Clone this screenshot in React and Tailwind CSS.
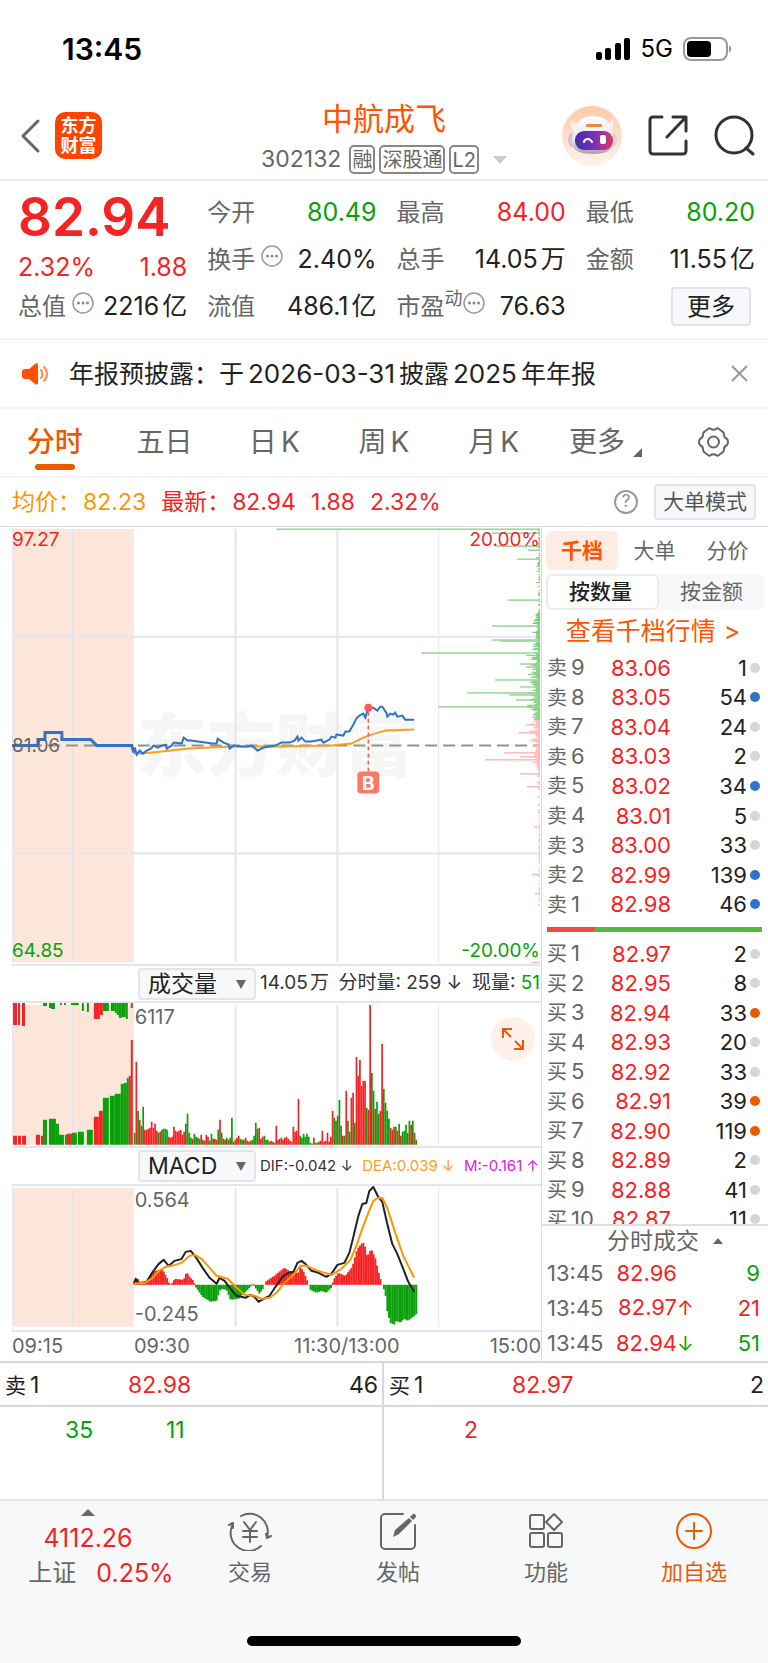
import React, { useState } from 'react';

const sellOrders = [
    { level: '9', price: '83.06', amount: 1, dot: 'gray' },
    { level: '8', price: '83.05', amount: 54, dot: 'blue' },
    { level: '7', price: '83.04', amount: 24, dot: 'gray' },
    { level: '6', price: '83.03', amount: 2, dot: 'gray' },
    { level: '5', price: '83.02', amount: 34, dot: 'blue' },
    { level: '4', price: '83.01', amount: 5, dot: 'gray' },
    { level: '3', price: '83.00', amount: 33, dot: 'gray' },
    { level: '2', price: '82.99', amount: 139, dot: 'blue' },
    { level: '1', price: '82.98', amount: 46, dot: 'blue' },
];

const buyOrders = [
    { level: '1', price: '82.97', amount: 2, dot: 'gray' },
    { level: '2', price: '82.95', amount: 8, dot: 'gray' },
    { level: '3', price: '82.94', amount: 33, dot: 'orange' },
    { level: '4', price: '82.93', amount: 20, dot: 'gray' },
    { level: '5', price: '82.92', amount: 33, dot: 'gray' },
    { level: '6', price: '82.91', amount: 39, dot: 'orange' },
    { level: '7', price: '82.90', amount: 119, dot: 'orange' },
    { level: '8', price: '82.89', amount: 2, dot: 'gray' },
    { level: '9', price: '82.88', amount: 41, dot: 'gray' },
    { level: '10', price: '82.87', amount: 11, dot: 'gray' },
];

const dotColors = {
    gray: 'bg-[#d3d6db]',
    blue: 'bg-[#2f74c8]',
    orange: 'bg-[#ec5a00]',
};

const RED = '#f52424';
const GREEN = '#0aa00a';
const GRID = '#e4e6ed';

// Price chart
const preOpenLine = '0,219 26,219 26,213 33,213 33,206 50,206 50,213 79,213 82,216 85,219 120,219 122,226';
const priceLine = '122,226 123,221 125,228 128,224 131,227 135,224 139,222 142,219 146,221 150,219 154,218 155,222 160,219 162,216 170,217 172,211 176,214 179,214 186,215 194,216 200,217 205,217 206,212 212,216 217,218 218,222 222,219 230,220 236,220 240,219 246,224 252,221 258,220 264,219 270,216 278,216 283,214 286,210 287,214 290,211 294,215 300,215 310,213 312,216 318,213 320,210 324,211 325,208 332,209 334,205 338,205 342,198 345,192 348,189 352,187 354,191 357,181 362,181 366,184 369,180 371,180 375,186 376,190 379,187 382,188 384,186 386,190 391,189 394,193 403,193';
const averageLine = '122,227 130,227 150,225 177,222 220,220 270,220 320,219 340,217 350,212 357,209 367,206 374,204 403,203';

// [y, length] of the resting orders at each price
const bigAsks = [[2, 264], [6, 48], [19, 44], [23, 12], [32, 23], [73, 32], [99, 48], [113, 48], [114, 40], [126, 119], [137, 20], [140, 14], [153, 45], [160, 20], [166, 73], [168, 31], [173, 24], [180, 102]];
const bigBids = [[198, 14], [206, 22], [226, 36], [230, 20], [233, 55], [247, 20], [260, 13], [300, 6], [348, 8], [367, 5], [436, 9]];

const noise = (n) => {
    const v = Math.sin(n * 12.9898) * 43758.5453;
    return v - Math.floor(v);
};

const smallOrders = [];
for (let y = 2; y < 380; y++) {
    let base = 1;
    let size = 4;
    if (y > 85 && y <= 125) { base = 2; size = 7; }
    if (y > 125 && y < 195) { base = 3; size = 12; }
    if (y >= 195 && y < 240) { base = 2; size = 10; }
    if (y >= 285) size = 1;
    if (y > 245 && noise(y + 7) < 0.6) continue;
    if (y < 85 && noise(y + 3) < 0.3) continue;
    smallOrders.push([y, base + noise(y) * noise(y + 50) * size]);
}

// Volume: plus is a rising minute, minus a falling one
const volumes = [-12, 83, -34, 25, 19, -38, 15, 15, 16, 17, 23, 17, 21, 14, -12, 13, -15, -16, -16, -15, 8, 7, 8, 18, 14, 13, 14, 15, 10, 13, -21, -31, -12, -7, 6, -11, -8, -7, 6, 10, -5, 4, 10, 8, -4, -11, -6, 6, 5, -15, 25, -12, -6, 5, -7, 5, -7, -27, 3, 5, 7, 9, -6, -5, 5, 7, -4, 3, 4, -5, -9, -22, -16, 17, 6, 8, -9, -5, -5, 3, 4, -3, 2, 19, 5, 6, -7, 5, 7, 8, 6, 4, 3, 18, 13, 14, 46, -9, -7, -11, -8, -11, -8, -2, 1, 7, -2, -2, -3, 4, 14, 3, 4, 12, 3, 8, 34, -27, -24, 29, -45, -19, 9, -9, 54, -24, -13, 47, 52, -22, 88, 69, 85, 59, 64, 64, -37, 35, 140, -72, -54, 36, -43, -31, 34, 101, -56, -42, -34, -26, 17, 15, -18, 18, 14, -21, 9, -13, -14, -20, 12, -24, 20, -24, 12, -5];

// Call auction: [x, width, height], sign as above
const auctionVolumes = [
    [1, 4, 9], [6, 3, 9], [10, 4, 9], [24, 4, 10], [29, 2, 9], [31, 4, -25], [37, 7, -26], [44, 3, -21], [47, 5, -10], [53, 2, -10], [55, 5, 11],
    [60, 5, -12], [66, 6, -13], [75, 6, -15], [82, 5, 28], [87, 4, 34], [91, 6, -47], [98, 5, -49], [103, 6, -51], [109, 3, -61], [112, 3, -62], [115, 2, -67], [117, 2, 69], [119, 2, 105],
];
const auctionUnmatched = [
    [1, 4, 22], [6, 2, 22], [10, 3, 23], [31, 4, -3], [37, 2, -5], [39, 4, -6], [48, 2, -2], [52, 2, -2], [59, 8, -2], [70, 2, -8], [75, 2, -9],
    [82, 6, 16], [88, 3, 12], [91, 6, -8], [99, 4, -8], [103, 2, -10], [105, 2, -12], [107, 3, -15], [110, 4, -14], [114, 2, -16], [119, 2, 5],
];

// MACD
const macdKnots = [[122, 5], [125, 7], [127, 1], [133, 2], [137, 9], [142, 14], [150, 15], [154, 8], [157, 0], [160, 2], [162, 6], [171, 5], [174, 13], [177, 8], [181, 4], [183, -2], [190, -12], [198, -17], [204, -16], [208, -4], [214, -5], [218, -15], [226, -14], [232, -8], [238, -2], [240, 1], [243, -3], [247, -9], [251, -3], [253, 3], [262, 9], [268, 14], [272, 17], [280, 12], [286, 12], [288, 18], [292, 12], [296, 1], [298, -5], [304, -8], [309, -6], [314, -8], [319, -3], [321, 5], [326, 12], [333, 9], [340, 18], [345, 36], [350, 42], [352, 42], [355, 28], [359, 36], [363, 27], [367, 10], [370, 0], [373, -8], [375, -26], [378, -38], [382, -40], [384, -36], [388, -38], [392, -34], [396, -36], [401, -32], [406, -28]];
const difLine = '122,98 124,93 126,97 130,97 135,96 141,86 147,78 152,74 157,80 163,75 170,73 174,66 179,65 184,71 191,82 198,92 205,98 208,92 213,95 219,103 225,110 234,112 239,109 243,111 247,116 252,113 258,110 264,101 271,91 277,87 282,86 286,77 290,75 294,78 300,85 307,87 315,91 320,88 326,79 333,77 338,67 342,51 347,30 351,18 355,17 358,5 362,1 367,11 371,16 376,38 381,58 386,68 392,83 397,96 403,106';
const deaLine = '122,98 133,97 141,92 147,85 154,81 160,80 170,77 178,70 183,69 190,73 198,82 205,90 216,93 224,101 233,109 243,110 250,113 258,112 265,107 272,98 282,89 289,80 295,80 304,84 313,87 320,89 330,83 339,74 345,60 352,40 357,27 362,15 366,12 371,12 376,22 384,47 392,70 403,92';

const macdAt = (x) => {
    const i = macdKnots.findIndex(k => k[0] >= x);
    if (i <= 0) return macdKnots[0][1];
    const [x0, h0] = macdKnots[i - 1];
    const [x1, h1] = macdKnots[i];
    return h0 + (h1 - h0) * (x - x0) / (x1 - x0);
};

const VerticalGrid = ({ top, bottom }) => (
    <g fill={GRID}>
        <rect x="60" y={top} width="2" height={bottom - top} />
        <rect x="223" y={top} width="2" height={bottom - top} />
        <rect x="325" y={top} width="2" height={bottom - top} />
        <rect x="427" y={top} width="1" height={bottom - top} />
    </g>
);

const StatusBar = () => (
    <div className="flex h-[90px] items-center justify-between pr-9 pl-[62px] pt-2">
        <span className="text-[30px] font-semibold text-black">13:45</span>
        <div className="flex items-center gap-[10px]">
            <svg width="35" height="22" viewBox="0 0 35 22">
                <rect x="0" y="14" width="6" height="8" rx="2" />
                <rect x="9" y="10" width="6" height="12" rx="2" />
                <rect x="19" y="5" width="6" height="17" rx="2" />
                <rect x="28" y="0" width="6" height="22" rx="2" />
            </svg>
            <span className="text-[24px] text-black">5G</span>
            <svg width="49" height="24" viewBox="0 0 49 24">
                <rect x="1" y="1" width="43" height="22" rx="7" fill="none" stroke="#9a9a9a" strokeWidth="2" />
                <rect x="4" y="4" width="24" height="16" rx="4" />
                <path d="M46 8.500c3 1 3 6 0 7z" fill="#9a9a9a" />
            </svg>
        </div>
    </div>
);

const Robot = () => (
    <svg width="60" height="60" viewBox="0 0 60 60">
        <defs>
            <linearGradient id="halo" x1="0" y1="0" x2="0" y2="1">
                <stop offset="0" stopColor="#ffc9ab" />
                <stop offset="1" stopColor="#fff3ec" />
            </linearGradient>
            <linearGradient id="visor" x1="0" y1="0" x2="1" y2="0">
                <stop offset="0" stopColor="#3d2fa8" />
                <stop offset="0.500" stopColor="#7a30b8" />
                <stop offset="1" stopColor="#e0385e" />
            </linearGradient>
            <linearGradient id="shell" x1="0" y1="0" x2="0" y2="1">
                <stop offset="0" stopColor="#ffffff" />
                <stop offset="0.600" stopColor="#e9e6ea" />
                <stop offset="1" stopColor="#a5a2ae" />
            </linearGradient>
        </defs>
        <circle cx="30" cy="30" r="30" fill="url(#halo)" />
        <path d="M9 13c-1 7 1 11 5 14l6-8c-5 0-9-2-11-6zM51 13c1 7 0 11-4 14l-7-8c5 0 9-2 11-6z" fill="#f1eff2" />
        <ellipse cx="10" cy="34" rx="4" ry="7" fill="#c9c5cf" />
        <ellipse cx="51" cy="34" rx="4" ry="7" fill="#d8d2d8" />
        <path d="M18 14c5-5 21-5 26 0 6 6 8 16 7 24-1 7-9 10-20 10s-20-3-21-10c-1-8 2-18 8-24z" fill="url(#shell)" />
        <rect x="24" y="18" width="16" height="3" rx="1" fill="#f08a3c" />
        <rect x="13" y="25" width="38" height="19" rx="9" fill="url(#visor)" />
        <path d="M22 36c1-4 6-4 8 0" fill="none" stroke="#fff" strokeWidth="2" strokeLinecap="round" />
        <rect x="38" y="29" width="6" height="9" rx="2" fill="#fff" />
    </svg>
);

const Header = () => (
    <header className="flex h-[91px] items-center justify-between border-b-2 border-[#ececee] px-[13px] pt-[2px]">
        <div className="flex w-[220px] items-center gap-3 pl-1">
            <button aria-label="返回">
                <svg width="26" height="36" viewBox="0 0 26 36" fill="none" stroke="#666" strokeWidth="3" strokeLinecap="round" strokeLinejoin="round">
                    <path d="M21 3L6 18l15 15" />
                </svg>
            </button>
            <div className="flex size-[47px] flex-col items-center justify-center rounded-[10px] bg-[#ff4400] text-[18px] leading-[20px] font-bold text-white">
                <span>东方</span>
                <span>财富</span>
            </div>
        </div>
        <div className="flex h-[87px] flex-col items-center pt-[6px]">
            <h1 className="text-[31px] leading-[42px] text-[#ff5500]">中航成飞</h1>
            <div className="flex h-[39px] items-center gap-1 text-[20px] text-[#666]">
                <span className="mr-1 text-[23px]">302132</span>
                <span className="flex h-[29px] items-center rounded-[5px] border-2 border-[#888] px-[1px]">融</span>
                <span className="flex h-[29px] items-center rounded-[5px] border-2 border-[#888] px-[1px]">深股通</span>
                <span className="flex h-[29px] items-center rounded-[5px] border-2 border-[#888] px-[1px]">L2</span>
                <svg className="ml-[10px]" width="14" height="8" viewBox="0 0 14 8"><path d="M0 0h14L7 8z" fill="#ccc" /></svg>
            </div>
        </div>
        <div className="flex w-[220px] items-center justify-end gap-[26px]">
            <Robot />
            <button aria-label="分享">
                <svg width="40" height="41" viewBox="0 0 40 41" fill="none" stroke="#333" strokeWidth="3" strokeLinejoin="round" strokeLinecap="round">
                    <path d="M14 2H5a3 3 0 0 0-3 3v31a3 3 0 0 0 3 3h30a3 3 0 0 0 3-3V26" />
                    <path d="M25 2h13v14M38 2L19 22" />
                </svg>
            </button>
            <button aria-label="搜索">
                <svg width="41" height="41" viewBox="0 0 41 41" fill="none" stroke="#333" strokeWidth="3" strokeLinecap="round">
                    <circle cx="20" cy="20" r="18" />
                    <path d="M32 33l7 6" />
                </svg>
            </button>
        </div>
    </header>
);

const MoreDots = () => (
    <svg className="mb-2 shrink-0" width="22" height="22" viewBox="0 0 22 22">
        <circle cx="11" cy="11" r="10" fill="none" stroke="#999" strokeWidth="1.500" />
        <g fill="#888">
            <circle cx="6.500" cy="11" r="1.500" />
            <circle cx="11" cy="11" r="1.500" />
            <circle cx="15.500" cy="11" r="1.500" />
        </g>
    </svg>
);

const QuoteItem = ({ label, value, unit, color = 'text-[#222]', dots }) => (
    <div className="flex items-center justify-between whitespace-nowrap">
        <div className="flex items-center gap-[6px] text-[#666]">
            <span>{label}</span>
            {dots && <MoreDots />}
        </div>
        <span className={`text-[25px] ${color}`}>{value}{unit && <span className="ml-[3px]">{unit}</span>}</span>
    </div>
);

const Quote = () => (
    <section className="grid auto-rows-[47px] grid-cols-4 gap-x-5 border-b-2 border-[#f4f4f6] pt-[8px] pr-[13px] pb-[8px] pl-[18px] text-[24px]">
        <div className="row-span-2 flex flex-col justify-between">
            <div className="text-[53px] leading-[56px] font-semibold text-[#f52424]">82.94</div>
            <div className="flex justify-between text-[25px] leading-[32px] text-[#f52424]">
                <span>2.32%</span>
                <span>1.88</span>
            </div>
        </div>
        <QuoteItem label="今开" value="80.49" color="text-[#0aa00a]" />
        <QuoteItem label="最高" value="84.00" color="text-[#f52424]" />
        <QuoteItem label="最低" value="80.20" color="text-[#0aa00a]" />
        <QuoteItem label="换手" value="2.40%" dots />
        <QuoteItem label="总手" value="14.05" unit="万" />
        <QuoteItem label="金额" value="11.55" unit="亿" />
        <QuoteItem label="总值" value="2216" unit="亿" dots />
        <QuoteItem label="流值" value="486.1" unit="亿" />
        <div className="flex items-center justify-between whitespace-nowrap">
            <div className="flex items-center text-[#666]">
                <span>市盈</span>
                <span className="mb-4 text-[18px]">动</span>
                <MoreDots />
            </div>
            <span className="text-[25px] text-[#222]">76.63</span>
        </div>
        <div className="flex items-center justify-end pr-1">
            <button className="flex h-[39px] w-[80px] items-center justify-center rounded-[4px] border-2 border-[#e1e4ea] bg-[#f7f8fa] text-[#222]">更多</button>
        </div>
    </section>
);

const Notice = () => (
    <section className="flex h-[69px] items-center border-b-2 border-[#f4f4f6] pr-5 pl-[22px]">
        <svg width="27" height="22" viewBox="0 0 27 22">
            <path d="M3 6h4l6-5c1-1 3-1 3 1v18c0 2-2 2-3 1l-6-5H3c-2 0-3-1-3-3V9c0-2 1-3 3-3z" fill="#ff5000" />
            <path d="M19 7c2 2 2 6 0 8M22 4c4 4 4 10 0 14" fill="none" stroke="#ff8a50" strokeWidth="2" strokeLinecap="round" />
        </svg>
        <p className="ml-5 flex-1 text-[25px] text-[#222]">
            年报预披露：于<span className="mx-1 text-[26px]">2026-03-31</span>披露<span className="mx-1 text-[26px]">2025</span>年年报
        </p>
        <button aria-label="关闭">
            <svg width="17" height="17" viewBox="0 0 17 17" stroke="#999" strokeWidth="2"><path d="M1 1l15 15M16 1L1 16" /></svg>
        </button>
    </section>
);

const periods = [
    { name: '分时' },
    { name: '五日' },
    { name: '日', suffix: 'K' },
    { name: '周', suffix: 'K' },
    { name: '月', suffix: 'K' },
];

const PeriodTabs = () => {
    const [period, setPeriod] = useState('分时');

    return (
        <nav className="grid h-[69px] grid-cols-7 border-b-2 border-[#f4f4f6] text-[28px]">
            {periods.map(({ name, suffix }) => (
                <button
                    key={name}
                    onClick={() => setPeriod(name)}
                    className={`flex flex-col items-center pt-[11px] ${period === name ? 'font-medium text-[#ec5a00]' : 'text-[#666]'}`}
                >
                    <span className="leading-[44px]">{name}{suffix && <span className="ml-1">{suffix}</span>}</span>
                    {period === name && <span className="h-[6px] w-10 rounded-full bg-[#ec5a00]" />}
                </button>
            ))}
            <button className="flex items-start justify-center gap-2 pt-[11px] pl-1 text-[#666]">
                <span className="leading-[44px]">更多</span>
                <svg className="mt-7" width="9" height="9" viewBox="0 0 9 9"><path d="M9 0v9H0z" fill="#666" /></svg>
            </button>
            <button aria-label="设置" className="flex items-start justify-center pt-[17px]">
                <svg width="33" height="32" viewBox="0 0 33 32" fill="none" stroke="#666" strokeWidth="2" strokeLinejoin="round">
                    <path d="M11 3c1-1 2-1 3 0 1 1 4 1 5 0 1-1 2-1 3 0l4 3c1 1 1 2 1 3 0 2 1 3 3 4 1 1 1 1 1 3s0 2-1 3c-2 1-3 2-3 4 0 1 0 2-1 3l-4 3c-1 1-2 1-3 0-1-1-4-1-5 0-1 1-2 1-3 0l-4-3c-1-1-1-2-1-3 0-2-1-3-3-4-1-1-1-1-1-3s0-2 1-3c2-1 3-2 3-4 0-1 0-2 1-3z" />
                    <circle cx="16.500" cy="16" r="5.500" />
                </svg>
            </button>
        </nav>
    );
};

const PriceSummary = () => (
    <div className="flex h-[48px] items-center justify-between pr-3 pl-3">
        <div className="flex gap-[15px] text-[23px] text-[#f52424]">
            <span className="text-[#ff9500]">均价：<span className="ml-[2px]">82.23</span></span>
            <span>最新：<span className="ml-[2px]">82.94</span></span>
            <span>1.88</span>
            <span>2.32%</span>
        </div>
        <div className="flex items-center gap-4">
            <button aria-label="帮助" className="flex size-6 items-center justify-center rounded-full border-2 border-[#999] text-[17px] text-[#888]">?</button>
            <button className="h-[36px] rounded-[4px] border-2 border-[#e1e4ea] bg-[#f7f8fa] px-[7px] text-[21px] leading-[32px] text-[#555]">大单模式</button>
        </div>
    </div>
);

const PriceChart = () => (
    <svg className="block w-full" viewBox="0 0 530 438" fontSize="19">
        <rect x="1" y="2" width="121" height="434" fill="#fce6da" />
        <text x="264" y="244" fontSize="69" fontWeight="900" textAnchor="middle" fill="#f6f6f7">东方财富</text>
        <VerticalGrid top={2} bottom={436} />
        <g fill={GRID}>
            <rect x="0" y="0" width="1" height="438" />
            <rect x="0" y="109" width="529" height="2" />
            <rect x="0" y="326" width="529" height="2" />
        </g>
        <path d="M0 219H529" stroke="#8f938f" strokeWidth="2" strokeDasharray="12 6" />
        <g>
            {smallOrders.map(([y, w]) => (
                <rect key={y} x={529 - w} y={y} width={w} height="1.200" fill={y < 194 ? '#7fd07f' : '#ffb3b3'} />
            ))}
            {bigAsks.map(([y, w]) => <rect key={y} x={529 - w} y={y - 0.5} width={w} height="1.500" fill="#96d796" />)}
            {bigBids.map(([y, w]) => <rect key={y} x={529 - w} y={y - 0.5} width={w} height="1.500" fill="#ffb9b9" />)}
        </g>
        <polyline points={averageLine} fill="none" stroke="#ff9d1e" strokeWidth="2" />
        <polyline points={preOpenLine} fill="none" stroke="#2f74c8" strokeWidth="3" />
        <polyline points={priceLine} fill="none" stroke="#2f74c8" strokeWidth="2" />
        <path d="M357 185V245" stroke="#ff5a4a" strokeWidth="1.500" strokeDasharray="4 3" />
        <circle cx="357" cy="181" r="4" fill="#ff5a5a" />
        <rect x="346" y="245" width="22" height="22" rx="4" fill="#ff7765" />
        <text x="357" y="263" fontWeight="700" textAnchor="middle" fill="#fff">B</text>
        <text x="0" y="19" fill={RED}>97.27</text>
        <text x="0" y="225" fill="#666">81.06</text>
        <text x="0" y="431" fill={GREEN}>64.85</text>
        <text x="529" y="19" textAnchor="end" fill={RED}>20.00%</text>
        <text x="529" y="431" textAnchor="end" fill={GREEN}>-20.00%</text>
    </svg>
);

const VolumeChart = () => (
    <svg className="block w-full" viewBox="0 0 530 143" fontSize="20">
        <rect x="1" y="2" width="121" height="140" fill="#fce6da" />
        <rect x="0" y="0" width="1" height="143" fill={GRID} />
        <VerticalGrid top={2} bottom={142} />
        {auctionUnmatched.map(([x, w, h]) => (
            <rect key={x} x={x} y="0" width={w} height={Math.abs(h)} fill={h > 0 ? RED : GREEN} />
        ))}
        {auctionVolumes.map(([x, w, h]) => (
            <rect key={x} x={x} y={142 - Math.abs(h)} width={w} height={Math.abs(h)} fill={h > 0 ? RED : GREEN} />
        ))}
        {volumes.map((v, i) => (
            <rect key={i} x={122 + i * 1.71} y={142 - Math.abs(v)} width="1.710" height={Math.abs(v)} fill={v > 0 ? RED : GREEN} />
        ))}
        <text x="123" y="21" fill="#666">6117</text>
    </svg>
);

const MacdChart = () => (
    <svg className="block w-full" viewBox="0 0 530 144" fontSize="20">
        <rect x="1" y="2" width="121" height="139" fill="#fce6da" />
        <rect x="0" y="0" width="1" height="144" fill={GRID} />
        <VerticalGrid top={2} bottom={141} />
        {volumes.map((v, i) => {
            const x = 122 + i * 1.71;
            const h = macdAt(x);
            return <rect key={i} x={x} y={h > 0 ? 99 - h : 99} width="1.900" height={Math.abs(h)} fill={h > 0 ? RED : GREEN} />;
        })}
        <polyline points={difLine} fill="none" stroke="#222" strokeWidth="2" strokeLinejoin="round" />
        <polyline points={deaLine} fill="none" stroke="#ff9500" strokeWidth="2" strokeLinejoin="round" />
        <text x="123" y="21" fill="#666">0.564</text>
        <text x="123" y="135" fill="#666">-0.245</text>
    </svg>
);

const IndicatorSelect = ({ name, options }) => (
    <div className="relative shrink-0">
        <select aria-label={name} className="block h-[32px] w-[118px] appearance-none rounded-[4px] border-2 border-[#e1e4ea] bg-[#f7f8fa] pl-2 text-[23px] leading-[28px] text-[#222]">
            {options.map(option => <option key={option}>{option}</option>)}
        </select>
        <svg className="pointer-events-none absolute top-3 right-[10px]" width="10" height="9" viewBox="0 0 10 9"><path d="M0 0h10L5 9z" fill="#666" /></svg>
    </div>
);

const Charts = () => (
    <div className="min-w-0 flex-1 border-r border-[#d9dce4] pl-3">
        <PriceChart />
        <div className="flex h-[39px] items-center gap-1 border-y-2 border-[#e4e6ed] pl-[126px] whitespace-nowrap">
            <IndicatorSelect name="副图一" options={['成交量', 'MACD']} />
            <p className="flex flex-1 justify-between pr-[1px] text-[19px] text-[#333]">
                <span>14.05<span className="ml-[2px]">万</span></span>
                <span>分时量: 259 ↓</span>
                <span>现量: <span className="text-[#0aa00a]">51</span></span>
            </p>
        </div>
        <div className="relative">
            <VolumeChart />
            <button aria-label="全屏" className="absolute top-[14px] right-[6px] flex size-11 items-center justify-center rounded-full bg-[#fef1ea]">
                <svg width="22" height="22" viewBox="0 0 22 22" fill="none" stroke="#ec5a00" strokeWidth="2">
                    <path d="M1 10V1h9M1 1l8 8M21 12v9h-9M21 21l-8-8" />
                </svg>
            </button>
        </div>
        <div className="flex h-[40px] items-center gap-1 border-y-2 border-[#e4e6ed] pl-[126px] whitespace-nowrap">
            <IndicatorSelect name="副图二" options={['MACD', '成交量']} />
            <p className="flex flex-1 justify-between pr-[2px] text-[15px] text-[#333]">
                <span>DIF:-0.042 ↓</span>
                <span className="text-[#ff9d1e]">DEA:0.039 ↓</span>
                <span className="text-[#e020e0]">M:-0.161 ↑</span>
            </p>
        </div>
        <MacdChart />
        <div className="flex h-[30px] items-center border-t-2 border-[#e4e6ed] text-[20px] text-[#666]">
            <span className="w-[122px]">09:15</span>
            <span className="w-[160px]">09:30</span>
            <span className="flex-1">11:30/13:00</span>
            <span>15:00</span>
        </div>
    </div>
);

const OrderTable = ({ side, orders, height }) => (
    <table className={`w-full text-[22px] leading-[24px] ${height}`}>
        <tbody>
            {orders.map(order => (
                <tr key={order.level}>
                    <th scope="row" className="w-[58px] p-0 text-left font-normal whitespace-nowrap text-[#666]">
                        <span className="mr-1 text-[20px]">{side}</span>{order.level}
                    </th>
                    <td className="w-[66px] p-0 text-right text-[#f52424]">{order.price}</td>
                    <td className="p-0 text-right text-[#222]">{order.amount}</td>
                    <td className="w-[13px] p-0 pl-[3px]"><span className={`block size-[10px] rounded-full ${dotColors[order.dot]}`} /></td>
                </tr>
            ))}
        </tbody>
    </table>
);

const OrderBook = () => (
    <aside className="flex w-[226px] shrink-0 flex-col pl-1">
        <div className="mt-1 mr-1 flex h-[39px] text-[21px] text-[#666]">
            <button className="w-[72px] rounded-[6px] bg-[#ffede4] font-bold text-[#ff5500]">千档</button>
            <button className="flex-1">大单</button>
            <button className="flex-1">分价</button>
        </div>
        <div className="mt-1 mr-1 flex h-[36px] rounded-[6px] bg-[#f7f8fa] text-[21px] text-[#666]">
            <button className="flex-1 rounded-[6px] border-2 border-[#ececf0] bg-white pr-1 font-medium text-[#222]">按数量</button>
            <button className="flex-1">按金额</button>
        </div>
        <a href="#" className="flex h-[43px] items-center justify-center gap-2 pr-2 text-[25px] text-[#ff5500]">查看千档行情 <span>&gt;</span></a>
        <div className="pr-2 pl-[1px]">
            <OrderTable side="卖" orders={sellOrders} height="h-[266px]" />
        </div>
        <div className="mt-2 mr-[6px] ml-[1px] flex h-[5px] bg-[#55b840]">
            <div className="w-[49px] bg-[#f04848] [clip-path:polygon(0_0,100%_0,92%_100%,0_100%)]" />
        </div>
        <div className="mt-[7px] h-[285px] overflow-hidden pr-2 pl-[1px]">
            <OrderTable side="买" orders={buyOrders} height="h-[295px]" />
        </div>
        <button className="-ml-1 flex h-[32px] items-center justify-center gap-[14px] border-t-2 border-[#dcdfe6] pl-5 text-[23px] text-[#666]">
            分时成交
            <svg width="10" height="6" viewBox="0 0 10 6"><path d="M0 6h10L5 0z" fill="#666" /></svg>
        </button>
        <table className="h-[105px] w-full text-[22px] leading-[24px]">
            <tbody>
                <tr>
                    <td className="w-[70px] p-0 pl-[1px] text-[#666]">13:45</td>
                    <td className="p-0 text-[#f52424]"><span className="inline-block w-[61px] text-right">82.96</span></td>
                    <td className="p-0 pr-2 text-right text-[#0aa00a]">9</td>
                </tr>
                <tr>
                    <td className="p-0 pl-[1px] text-[#666]">13:45</td>
                    <td className="p-0 text-[#f52424]"><span className="inline-block w-[61px] text-right">82.97</span><span className="text-[20px]">↑</span></td>
                    <td className="p-0 pr-2 text-right text-[#f52424]">21</td>
                </tr>
                <tr>
                    <td className="p-0 pl-[1px] text-[#666]">13:45</td>
                    <td className="p-0 text-[#f52424]"><span className="inline-block w-[61px] text-right">82.94</span><span className="text-[20px] text-[#0aa00a]">↓</span></td>
                    <td className="p-0 pr-2 text-right text-[#0aa00a]">51</td>
                </tr>
            </tbody>
        </table>
    </aside>
);

const BestLevel = ({ label, price, amount }) => (
    <div className="flex h-[46px] items-center border-y-2 border-[#d5d8e0] pt-[2px] pr-1 pl-[5px] text-[23px] text-[#222]">
        <span className="w-[123px]"><span className="mr-1 text-[21px]">{label}</span>1</span>
        <span className="flex-1 text-[#f52424]">{price}</span>
        <span>{amount}</span>
    </div>
);

const BestLevels = () => (
    <section className="grid grid-cols-2">
        <div className="h-[138px] border-r-2 border-[#d5d8e0]">
            <BestLevel label="卖" price="82.98" amount="46" />
            <div className="flex h-[46px] items-center pl-[65px] text-[23px] text-[#0aa00a]">
                <span className="w-[101px]">35</span>
                <span>11</span>
            </div>
        </div>
        <div>
            <BestLevel label="买" price="82.97" amount="2" />
            <div className="flex h-[46px] items-center pl-20 text-[23px] text-[#f52424]">2</div>
        </div>
    </section>
);

const TradeIcon = () => (
    <svg width="44" height="40" viewBox="0 0 44 40" fill="none" stroke="#666" strokeWidth="2" strokeLinecap="round" strokeLinejoin="round">
        <path d="M13 5A18 18 0 0 1 39 26M43 25l-4 2-1-4" />
        <path d="M33 35A18 18 0 0 1 5 13M1 14l4-2v5" />
        <path d="M16 11l6 8 6-8M15 20h14M15 26h14M22 20v11" />
    </svg>
);

const PostIcon = () => (
    <svg width="38" height="40" viewBox="0 0 38 40" fill="none" stroke="#666" strokeWidth="2" strokeLinecap="round">
        <path d="M24 3H6a4 4 0 0 0-4 4v27a4 4 0 0 0 4 4h26a4 4 0 0 0 4-4V14" />
        <path d="M14 26l2-7L30 7l3 3-13 13z" fill="#666" stroke="none" />
        <path d="M31 6l3-3c1-1 4 2 3 3l-3 3z" fill="#666" stroke="none" />
    </svg>
);

const FeatureIcon = () => (
    <svg width="36" height="38" viewBox="0 0 36 38" fill="none" stroke="#666" strokeWidth="2" strokeLinejoin="round">
        <rect x="2" y="3" width="14" height="14" rx="2" />
        <path d="M26 2l8 8-8 8-8-8z" />
        <rect x="2" y="21" width="14" height="14" rx="2" />
        <rect x="20" y="21" width="14" height="14" rx="2" />
    </svg>
);

const AddIcon = () => (
    <svg width="38" height="38" viewBox="0 0 38 38" fill="none" stroke="#ec5a00" strokeWidth="2" strokeLinecap="round">
        <circle cx="19" cy="19" r="17" />
        <path d="M19 11v16M11 19h16" />
    </svg>
);

const actions = [
    { label: '交易', Icon: TradeIcon },
    { label: '发帖', Icon: PostIcon },
    { label: '功能', Icon: FeatureIcon },
    { label: '加自选', Icon: AddIcon, active: true },
];

const BottomBar = () => (
    <footer className="h-[164px] border-t-2 border-[#e2e4e8] bg-[#f7f8fa]">
        <div className="flex h-[135px] items-start">
            <button className="flex w-[176px] flex-col items-center pt-2 text-[25px] text-[#f52424]">
                <svg width="14" height="7" viewBox="0 0 14 7"><path d="M0 7h14L7 0z" fill="#666" /></svg>
                <span className="mt-1 leading-[36px]">4112.26</span>
                <span className="flex gap-5 pl-[26px] leading-[34px]"><span className="text-[24px] text-[#666]">上证</span>0.25%</span>
            </button>
            {actions.map(({ label, Icon, active }) => (
                <button key={label} className={`flex flex-1 flex-col items-center pt-[10px] text-[22px] ${active ? 'text-[#ec5a00]' : 'text-[#666]'}`}>
                    <span className="flex h-[40px] items-center"><Icon /></span>
                    <span className="mt-1 leading-[34px]">{label}</span>
                </button>
            ))}
        </div>
        <div className="mx-auto h-[10px] w-[274px] rounded-full bg-black" />
    </footer>
);

const App = () => {
    return (
        <div className="min-h-screen bg-white font-['Inter','Noto_Sans_CJK_SC',sans-serif]">
            <StatusBar />
            <Header />
            <Quote />
            <Notice />
            <PeriodTabs />
            <PriceSummary />
            <main className="flex border-t border-[#d9dce4]">
                <Charts />
                <OrderBook />
            </main>
            <BestLevels />
            <BottomBar />
        </div>
    );
};

export default App;
